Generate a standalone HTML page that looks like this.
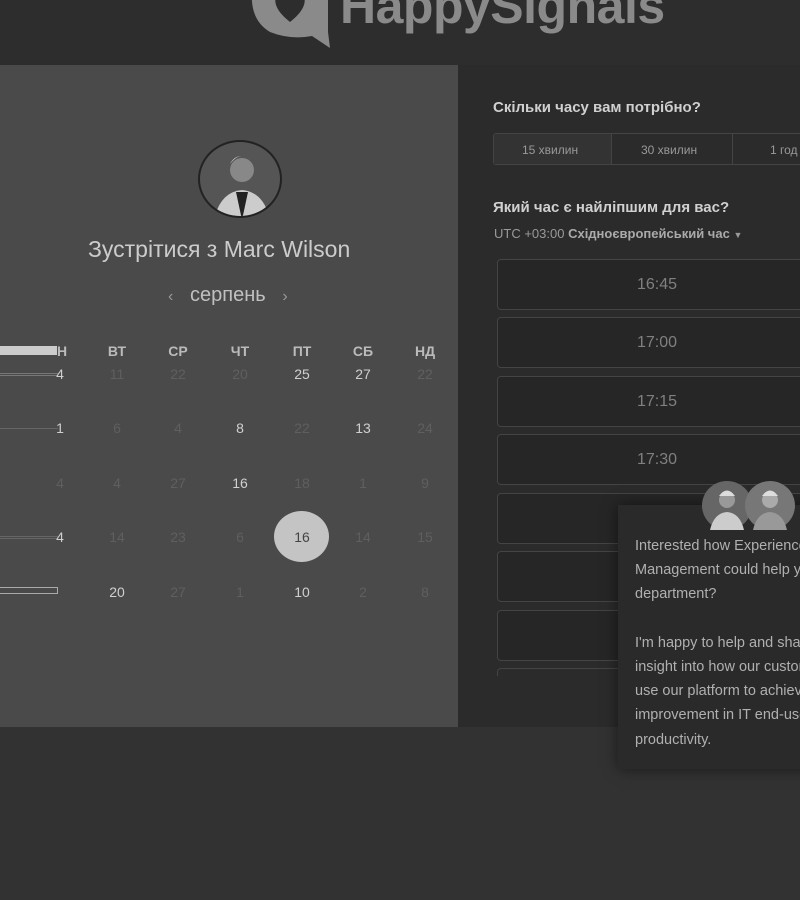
<!DOCTYPE html>
<html><head><meta charset="utf-8"><style>
*{margin:0;padding:0;box-sizing:border-box}
body{width:800px;height:900px;background:#323232;font-family:"Liberation Sans",sans-serif;position:relative;overflow:hidden}
.hdr{position:absolute;left:0;top:0;width:800px;height:65px;background:#2d2d2d}
.logo{position:absolute;left:340px;top:-23px;font-size:50px;font-weight:bold;color:#8a8a8a;letter-spacing:-0.5px}
.left{position:absolute;left:0;top:65px;width:458px;height:662px;background:#4a4a4a}
.right{position:absolute;left:458px;top:65px;width:342px;height:662px;background:#2b2b2b}
.av{position:absolute;left:198px;top:140px;width:84px;height:78px;border-radius:50%;background:#555;border:2px solid #222;overflow:hidden}
.t{position:absolute;color:#c8c8c8}
.dh{position:absolute;top:343px;font-size:14px;font-weight:bold;color:#bbb;width:40px;text-align:center}
.d{position:absolute;font-size:14px;width:40px;text-align:center;color:#5f5f5f}
.d.b{color:#d0d0d0}
.slot{position:absolute;left:497px;width:320px;height:51px;border:1px solid #444;border-radius:4px;color:#808080;font-size:16px;text-align:center;line-height:49px;background:#262626}
.chat{position:absolute;left:618px;top:505px;width:200px;height:264px;background:#2a2a2a;box-shadow:0 0 14px rgba(0,0,0,.5);color:#b0b0b0;font-size:14.5px;line-height:24.2px;padding:29px 0 0 17px;white-space:nowrap}
</style></head><body>
<div class="hdr"></div>
<svg style="position:absolute;left:250px;top:-12px" width="82" height="62"><path d="M2 4 L78 4 L78 44 L80 60 L62 48 Q40 52 20 44 Q0 32 2 4Z" fill="#8a8a8a"/><path d="M40 34 Q22 20 26 8 L54 8 Q58 20 40 34Z" fill="#2d2d2d"/></svg>
<div class="logo">HappySignals</div>
<div class="left"></div>
<div class="right"></div>
<div class="av"><svg width="84" height="78"><circle cx="42" cy="28" r="12" fill="#888"/><path d="M30 22 Q42 6 54 22 Q48 14 42 14 Q34 14 30 22Z" fill="#ddd"/><path d="M14 78 Q20 50 42 48 Q64 50 70 78Z" fill="#ccc"/><path d="M36 50 L42 78 L48 50Z" fill="#222"/></svg></div>
<div class="t" style="left:88px;top:236px;font-size:23px;color:#ccc">Зустрітися з Marc Wilson</div>
<div class="t" style="left:168px;top:284px;font-size:20px;color:#c0c0c0"><span style="font-size:16px;color:#999">‹</span>&nbsp;&nbsp; серпень &nbsp;&nbsp;<span style="font-size:16px;color:#999">›</span></div>
<div style="position:absolute;left:0;top:346px;width:57px;height:9px;background:#ccc"></div>
<div class="dh" style="left:42px">Н</div>
<div class="dh" style="left:97px">ВТ</div><div class="dh" style="left:158px">СР</div><div class="dh" style="left:220px">ЧТ</div><div class="dh" style="left:282px">ПТ</div><div class="dh" style="left:343px">СБ</div><div class="dh" style="left:405px">НД</div>
<div style="position:absolute;left:0;top:373px;width:58px;height:3px;border-top:1px solid #777;border-bottom:1px solid #777"></div>
<div style="position:absolute;left:0;top:428px;width:58px;height:2px;border-top:1px solid #666"></div>
<div style="position:absolute;left:0;top:536px;width:58px;height:3px;border-top:1px solid #666;border-bottom:1px solid #666"></div>
<div style="position:absolute;left:0;top:587px;width:58px;height:7px;border:1px solid #aaa;border-left:none"></div>
<div style="position:absolute;left:274px;top:511px;width:55px;height:51px;border-radius:50%;background:#c4c4c4"></div>
<div id="cal"></div>
<script>
var rows=[[366,["4b","11","22","20","25b","27b","22"]],[420,["1b","6","4","8b","22","13b","24"]],[475,["4","4","27","16b","18","1","9"]],[529,["4b","14","23","6","16s","14","15"]],[584,["","20b","27","1","10b","2","8"]]];
var xs=[40,97,158,220,282,343,405],h="";
rows.forEach(function(r){r[1].forEach(function(v,i){if(!v)return;var b=v.indexOf("b")>0,s=v.indexOf("s")>0;v=v.replace(/[bs]/g,"");
h+='<div class="d'+(b?' b':'')+'" style="left:'+xs[i]+'px;top:'+r[0]+'px;'+(s?'color:#444;':'')+'">'+v+'</div>';});});
document.getElementById("cal").innerHTML=h;
</script>
<div class="t" style="left:493px;top:99px;font-size:15px;font-weight:bold;color:#d0d0d0">Скільки часу вам потрібно?</div>
<div style="position:absolute;left:493px;top:133px;width:320px;height:32px;border:1px solid #444;border-radius:3px;background:#2b2b2b"></div>
<div style="position:absolute;left:494px;top:134px;width:118px;height:30px;background:#333;border-right:1px solid #444"></div>
<div style="position:absolute;left:732px;top:134px;height:30px;border-left:1px solid #444"></div>
<div class="t" style="left:522px;top:143px;font-size:12px;color:#999">15 хвилин</div>
<div class="t" style="left:641px;top:143px;font-size:12px;color:#999">30 хвилин</div>
<div class="t" style="left:770px;top:143px;font-size:12px;color:#999">1 год</div>
<div class="t" style="left:493px;top:199px;font-size:15px;font-weight:bold;color:#d0d0d0">Який час є найліпшим для вас?</div>
<div class="t" style="left:494px;top:226px;font-size:13px;color:#999">UTC +03:00 <b style="color:#aaa">Східноєвропейський час</b> <span style="font-size:9px">▼</span></div>
<div class="slot" style="top:259px">16:45</div>
<div class="slot" style="top:317px">17:00</div>
<div class="slot" style="top:376px">17:15</div>
<div class="slot" style="top:434px">17:30</div>
<div class="slot" style="top:493px"></div>
<div class="slot" style="top:551px"></div>
<div class="slot" style="top:610px"></div>
<div style="position:absolute;left:497px;top:668px;width:320px;height:8px;border:1px solid #444;border-bottom:none;border-radius:4px 4px 0 0"></div>
<div class="chat">Interested how Experience<br>Management could help your<br>department?<br><br>I'm happy to help and share<br>insight into how our customers<br>use our platform to achieve<br>improvement in IT end-user<br>productivity.</div>
<div style="position:absolute;left:702px;top:481px;width:50px;height:49px;border-radius:50%;background:#666"><svg width="50" height="49"><circle cx="25" cy="19" r="8" fill="#999"/><path d="M17 15 Q25 4 33 15Z" fill="#ddd"/><path d="M8 49 Q12 32 25 31 Q38 32 42 49Z" fill="#ccc"/></svg></div>
<div style="position:absolute;left:745px;top:481px;width:50px;height:49px;border-radius:50%;background:#777"><svg width="50" height="49"><circle cx="25" cy="19" r="8" fill="#aaa"/><path d="M17 15 Q25 4 33 15Z" fill="#ddd"/><path d="M8 49 Q12 32 25 31 Q38 32 42 49Z" fill="#999"/></svg></div>
</body></html>
